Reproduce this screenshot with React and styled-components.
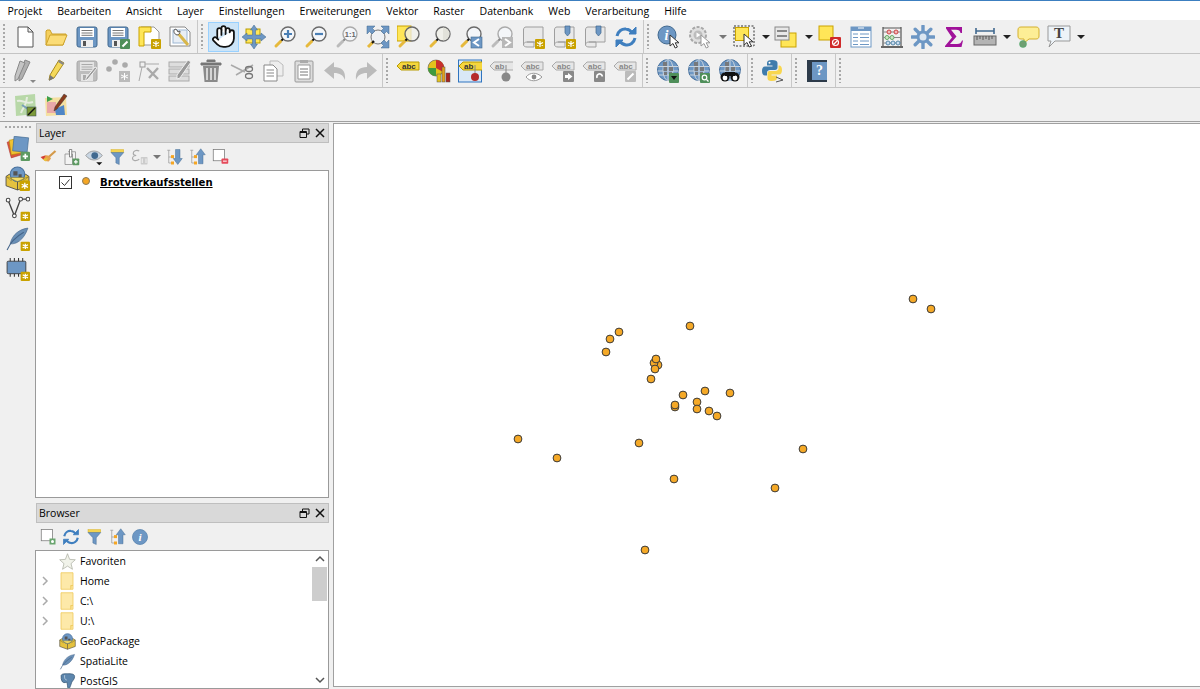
import React from "react";
import styled, { createGlobalStyle } from "styled-components";
import { Hand } from "lucide-react";

const Global = createGlobalStyle`
  html, body { margin: 0; padding: 0; background: #f0f0f0; overflow: hidden; }
  body { font-family: "Open Sans", "Liberation Sans", sans-serif; font-size: 10.5px; color: #000; }
`;

const Page = styled.div`
  width: 1200px;
  height: 689px;
  display: flex;
  flex-direction: column;
  overflow: hidden;
`;

const MenuBar = styled.div`
  height: 19px;
  flex: none;
  display: flex;
  align-items: center;
  background: #fff;
  border-top: 1px solid #3c7fc0;
`;

const MenuItem = styled.span`
  padding: 0 7.5px;
  font-size: 10.5px;
  line-height: 18px;
  white-space: nowrap;
`;

const Toolbar = styled.div`
  height: 33px;
  flex: none;
  display: flex;
  align-items: stretch;
  background: #f0f0f0;
  border-bottom: 1px solid ${(p) => (p.$last ? "#a0a0a0" : "#c4c4c4")};
`;

const ToolGroup = styled.div`
  display: flex;
  align-items: center;
  padding-right: ${(p) => p.$pad ?? 1}px;
  border-right: ${(p) => (p.$open ? "none" : "1px solid #c8c8c8")};
`;

const Handle = styled.div`
  width: 10px;
  height: 100%;
  flex: none;
  box-sizing: border-box;
  padding: 4px 0 4px 3px;
  &::before {
    content: "";
    display: block;
    width: 3px;
    height: 100%;
    background: radial-gradient(circle at 1px 1px, #a8a8a8 1px, transparent 1.2px) 0 0 / 3px 4px;
  }
`;

const ToolButton = styled.div`
  width: 31px;
  height: 30px;
  flex: none;
  box-sizing: border-box;
  display: flex;
  align-items: center;
  justify-content: center;
  padding-right: ${(p) => (p.$active ? 0 : 1)}px;
  background: ${(p) => (p.$active ? "#cce4f7" : "transparent")};
  border: 1px solid ${(p) => (p.$active ? "#99d1ff" : "transparent")};
`;

const Caret = styled.div`
  width: ${(p) => p.$w}px;
  flex: none;
  display: flex;
  justify-content: center;
  &::before {
    content: "";
    border-left: 4px solid transparent;
    border-right: 4px solid transparent;
    border-top: 4px solid ${(p) => (p.$muted ? "#777" : "#222")};
  }
`;

const Main = styled.div`
  flex: 1;
  min-height: 0;
  display: flex;
  padding-top: 1px;
`;

const Strip = styled.div`
  width: 35px;
  flex: none;
  display: flex;
  flex-direction: column;
  align-items: center;
  padding-top: 3px;
`;

const StripHandle = styled.div`
  width: 26px;
  height: 3px;
  margin-bottom: 4px;
  background: radial-gradient(circle at 1px 1px, #a8a8a8 1px, transparent 1.2px) 0 0 / 4px 3px;
`;

const StripButton = styled.div`
  height: 30px;
  display: flex;
  align-items: center;
  justify-content: center;
`;

const Docks = styled.div`
  width: 294px;
  flex: none;
  display: flex;
  flex-direction: column;
  gap: 5px;
  margin-right: 4px;
`;

const Dock = styled.section`
  display: flex;
  flex-direction: column;
  flex: ${(p) => (p.$grow ? "1" : "none")};
  min-height: 0;
  height: ${(p) => (p.$h ? `${p.$h}px` : "auto")};
`;

const DockTitle = styled.header`
  height: 18px;
  flex: none;
  display: flex;
  align-items: center;
  padding: 0 3px 0 2px;
  margin-left: 1px;
  background: #d9d9d9;
  border: 1px solid #bfbfbf;
`;

const DockName = styled.span`
  flex: 1;
`;

const DockActions = styled.div`
  display: flex;
  align-items: center;
  gap: 5px;
`;

const DockTools = styled.div`
  height: 27px;
  flex: none;
  display: flex;
  align-items: center;
  padding-left: 1px;
`;

const DockTool = styled.div`
  width: 23px;
  height: 22px;
  flex: none;
  display: flex;
  align-items: center;
  justify-content: center;
`;

const TreeBox = styled.div`
  flex: 1;
  min-height: 0;
  position: relative;
  background: #fff;
  border: 1px solid #9a9a9a;
  overflow: hidden;
`;

const LayerRow = styled.div`
  height: 22px;
  display: flex;
  align-items: center;
  padding-left: 23px;
`;

const CheckBox = styled.div`
  width: 13px;
  height: 13px;
  flex: none;
  box-sizing: border-box;
  display: flex;
  align-items: center;
  justify-content: center;
  background: #fff;
  border: 1px solid #333;
`;

const LayerDot = styled.span`
  width: 6px;
  height: 6px;
  margin: 0 10px 2px 10px;
  flex: none;
  border-radius: 50%;
  background: #f5a623;
  border: 1px solid #8a7a5a;
`;

const LayerName = styled.span`
  font-family: "DejaVu Sans", sans-serif;
  font-size: 10.1px;
  font-weight: 700;
  text-decoration: underline;
`;

const BrowserRow = styled.div`
  height: 20px;
  display: flex;
  align-items: center;
`;

const Expander = styled.span`
  width: 21px;
  padding-right: 3px;
  box-sizing: border-box;
  flex: none;
  display: flex;
  justify-content: center;
`;

const RowIcon = styled.span`
  width: 20px;
  margin-right: 3px;
  flex: none;
  display: flex;
  justify-content: center;
`;

const ScrollTrack = styled.div`
  position: absolute;
  top: 0;
  right: 1px;
  bottom: 0;
  width: 15px;
  display: flex;
  flex-direction: column;
  align-items: center;
  background: #fff;
`;

const ScrollArrow = styled.div`
  height: 16px;
  flex: none;
  display: flex;
  align-items: center;
  justify-content: center;
`;

const ScrollThumb = styled.div`
  width: 100%;
  height: 34px;
  background: #cdcdcd;
`;

const ScrollRest = styled.div`
  flex: 1;
`;

const Canvas = styled.main`
  flex: 1;
  min-width: 0;
  height: 562px;
  background: #fff;
  border-left: 1px solid #a0a0a0;
  border-top: 1px solid #a0a0a0;
  border-bottom: 1px solid #a0a0a0;
`;

const MapSvg = styled.svg`
  display: block;
  width: 100%;
  height: 100%;
`;

const Icon = ({ size = 24, children }) => (
  <svg width={size} height={size} viewBox="0 0 24 24" fill="none">
    {children}
  </svg>
);

const BLUE = "#6d97c4";
const DBLUE = "#41698f";
const YEL = "#ffe658";
const GOLD = "#c9a200";

const Lens = ({ muted, glass = "#f4f6f9", children }) => (
  <g>
    <circle cx="15" cy="9" r="7" fill={glass} stroke={muted ? "#aaa" : "#6a6a6a"} strokeWidth="1.4" />
    <path d="M10 14L7.5 16.5" stroke={muted ? "#888" : "#111"} strokeWidth="2" />
    <path d="M7.5 16.5L3 21" stroke={muted ? "#bbb" : "#e6b93c"} strokeWidth="3" strokeLinecap="round" />
    {children}
  </g>
);

const GoldBadge = ({ x = 14, y = 14, s = 10 }) => (
  <g transform={`translate(${x} ${y})`}>
    <rect width={s} height={s} rx="1" fill={GOLD} />
    <path
      d={`M${s / 2} 2V${s - 2}M2 ${s / 2 - 1.5}L${s - 2} ${s / 2 + 1.5}M2 ${s / 2 + 1.5}L${s - 2} ${s / 2 - 1.5}`}
      stroke="#fff"
      strokeWidth="1.2"
    />
  </g>
);

const PlusBadge = ({ x = 15, y = 15, s = 9, color = "#5d9a62" }) => (
  <g transform={`translate(${x} ${y})`}>
    <rect width={s} height={s} rx="1" fill={color} />
    <path d={`M${s / 2} 2V${s - 2}M2 ${s / 2}H${s - 2}`} stroke="#fff" strokeWidth="1.6" />
  </g>
);

const Cursor = ({ x = 12, y = 10, muted }) => (
  <path
    transform={`translate(${x} ${y})`}
    d="M0 0V11L3 8.5L5.2 13L7.4 12L5.2 7.8H9Z"
    fill="#fff"
    stroke={muted ? "#999" : "#333"}
    strokeWidth="1"
  />
);

const Floppy = ({ muted }) => {
  const main = muted ? "#bdbdbd" : BLUE;
  const edge = muted ? "#a8a8a8" : DBLUE;
  return (
    <g>
      <rect x="2" y="2" width="20" height="20" rx="2" fill={main} stroke={edge} />
      <rect x="5" y="3" width="14" height="9" fill={muted ? "#e4e4e4" : "#fff"} />
      <path d="M6.5 5.5H17.5M6.5 8H17.5M6.5 10.3H17.5" stroke={muted ? "#aaa" : "#777"} />
      <rect x="6" y="15" width="12" height="7" fill={muted ? "#e4e4e4" : "#eee"} />
      <rect x="8" y="16" width="3" height="5" fill={muted ? "#aaa" : "#555"} />
    </g>
  );
};

const PencilBadge = ({ color = "#4f8f5a" }) => (
  <g>
    <rect x="14" y="14" width="10" height="10" rx="1" fill={color} />
    <path d="M16.5 21.5L21.5 16.5" stroke="#fff" strokeWidth="2" />
  </g>
);

const Scroll = () => (
  <path
    d="M5 2H22V17H6C4 17 2.5 18 2.5 20V5C2.5 3 3.5 2 5 2ZM2.5 20C2.5 21 4 22 6 22H13V17H6"
    fill="#e9e9e9"
    stroke="#9e9e9e"
  />
);

const BookMark = () => <path d="M13 1H18V8L15.5 11L13 8Z" fill={BLUE} stroke={DBLUE} strokeWidth=".7" />;

const Globe = ({ children }) => (
  <g>
    <circle cx="12" cy="11" r="10.5" fill={BLUE} stroke="#456f9c" />
    <ellipse cx="12" cy="11" rx="5" ry="10.5" stroke="#c9d3dd" />
    <path d="M2 7.5H22M1.5 12H22.5M3 16H21M12 .5V21.5" stroke="#c9d3dd" />
    <path d="M7 3H11V7H7ZM13 8H17V12H13ZM7.5 8H11V12H7.5ZM8 13H11V16H8ZM13 13H16V16H13Z" fill="#77797c" />
    {children}
  </g>
);

const Tag = ({ text, fill = "#e6e6e6", edge = "#aaa", color = "#888", width = 18 }) => (
  <g>
    <path d={`M1 7L5 3H${5 + width}V11H5Z`} fill={fill} stroke={edge} />
    <text x="6" y="10" fontFamily="Liberation Sans, sans-serif" fontWeight="700" fontSize="8" fill={color}>
      {text}
    </text>
  </g>
);

const Funnel = () => (
  <g>
    <rect x="4" y="2" width="17" height="4" fill="#f3d34f" stroke="#d4b02d" strokeWidth=".6" />
    <path d="M4 6H21L15 13V22L10.5 20V13Z" fill={BLUE} stroke={DBLUE} strokeWidth=".6" />
  </g>
);

const Refresh = () => (
  <g stroke="#3f7fbf" strokeWidth="3" fill="none">
    <path d="M3 11C4 6 8 3.5 12 4C15 4.3 17 6 18 8" />
    <path d="M21 13C20 18 16 20.5 12 20C9 19.7 7 18 6 16" />
    <path d="M15 9H22V2Z" fill="#3f7fbf" strokeWidth="1" />
    <path d="M9 15H2V22Z" fill="#3f7fbf" strokeWidth="1" />
  </g>
);

const TreeArrows = ({ up }) => (
  <g>
    <path d="M3 3H7M5 3V20H8M5 12H8" stroke="#999" />
    <rect x="8" y="9.5" width="4" height="4" fill="#f5a623" />
    <rect x="8" y="18" width="4" height="4" fill="#f5a623" />
    <path
      d={up ? "M17 1L23 9H20V21H14V9H11Z" : "M14 2H20V14H23L17 22L11 14H14Z"}
      fill={BLUE}
      stroke={DBLUE}
      strokeWidth=".6"
    />
  </g>
);

const Gpkg = () => (
  <g>
    <path d="M1 10L4 8H20L23 10V19L12 23L1 19Z" fill="#e5c23f" stroke="#444" strokeWidth=".8" />
    <circle cx="12" cy="8" r="7" fill={BLUE} stroke="#456f9c" />
    <path d="M8 5H12V9H8ZM13 8H16V11H13Z" fill="#555" />
    <path d="M1 10L12 15L23 10L18 14V11H6V14Z" fill="#f2dc6a" stroke="#7a6a20" strokeWidth=".5" />
    <path d="M12 15V23" stroke="#444" strokeWidth=".8" />
  </g>
);

const Feather = ({ color = "#6a8fb5" }) => (
  <g>
    <path d="M22 2C14 3 7 8 5 17C10 18 18 14 22 2Z" fill={color} stroke="#45658a" strokeWidth=".6" />
    <path d="M2 23C5 16 11 10 18 6" stroke="#45658a" strokeWidth="1" />
  </g>
);

const icons = {
  newFile: <path d="M5 2H15L20 7V22H5Z M15 2V7H20" fill="#fff" stroke="#555" strokeWidth="1" />,
  open: (
    <g>
      <path d="M2 6V20H19L22 9H8L6 5H3Z" fill="#f5cf5c" stroke="#cda22b" />
      <path d="M2 20L6 10H23L19 20Z" fill="#fbdc76" stroke="#cda22b" />
    </g>
  ),
  save: <Floppy />,
  saveAs: (
    <g>
      <Floppy />
      <PencilBadge />
    </g>
  ),
  newLayout: (
    <g>
      <path d="M4 2H17L22 7V20H4Z" fill="#fff" stroke="#999" />
      <path d="M2 2H14V7H7V21H2Z" fill="#ffe658" stroke="#c9a200" />
      <GoldBadge />
    </g>
  ),
  layouts: (
    <g>
      <path d="M2 2H17L22 7V21H2Z" fill="#fff" stroke="#888" />
      <rect x="5" y="5" width="14" height="13" fill="#e8eef5" stroke="#9db7d3" />
      <path d="M9 7L20 20" stroke="#d8b64a" strokeWidth="3" />
      <path d="M7 4C5 6 6 9 9 10C11 10 12 8 12 6L10 7L9 5Z" fill="#fff" stroke="#555" />
    </g>
  ),
  pan: <Hand size={25} color="#111" fill="#fff" strokeWidth={1.7} />,
  panSelect: (
    <g>
      <rect x="4" y="4" width="14" height="14" fill={YEL} stroke="#b89b00" />
      <path
        d="M12 0L15.5 5H13.5V10H19V8L24 12L19 16V14H13.5V19H15.5L12 24L8.5 19H10.5V14H5V16L0 12L5 8V10H10.5V5H8.5Z"
        fill={BLUE}
        stroke={DBLUE}
        strokeWidth=".5"
      />
    </g>
  ),
  zoomIn: (
    <Lens>
      <path d="M15 5V13M11 9H19" stroke="#4a7fb5" strokeWidth="2.2" />
    </Lens>
  ),
  zoomOut: (
    <Lens>
      <path d="M11 9H19" stroke="#4a7fb5" strokeWidth="2.2" />
    </Lens>
  ),
  zoomActual: (
    <Lens muted>
      <text x="9.8" y="12" fontFamily="Liberation Sans, sans-serif" fontWeight="700" fontSize="7.5" fill="#666">
        1:1
      </text>
    </Lens>
  ),
  zoomFull: (
    <g>
      <circle cx="12" cy="12" r="7" fill="#eef1f4" stroke="#777" />
      <path
        d="M1 1H9L6.5 3.5L9 6L6 9L3.5 6.5L1 9ZM23 1V9L20.5 6.5L18 9L15 6L17.5 3.5L15 1ZM23 23H15L17.5 20.5L15 18L18 15L20.5 17.5L23 15Z"
        fill={BLUE}
        stroke={DBLUE}
        strokeWidth=".5"
      />
      <path d="M7 17L2 22" stroke="#e6b93c" strokeWidth="3" />
      <path d="M8 16L6 18" stroke="#111" strokeWidth="2" />
    </g>
  ),
  zoomLayer: (
    <g>
      <rect x="0" y="1" width="14" height="15" fill={YEL} stroke="#c9a200" />
      <Lens glass="rgba(240,240,235,.75)" />
    </g>
  ),
  zoomSelection: (
    <Lens glass="#f0f0ea">
      <path d="M15 2.5A6.5 6.5 0 0 1 15 15.5Z" fill="#e2e2da" />
    </Lens>
  ),
  zoomLast: (
    <g>
      <Lens />
      <rect x="12" y="12" width="11" height="11" fill={BLUE} stroke={DBLUE} strokeWidth=".6" />
      <path d="M20 14L15 17.5L20 21" stroke="#fff" strokeWidth="2" fill="none" />
    </g>
  ),
  zoomNext: (
    <g>
      <Lens muted />
      <rect x="12" y="12" width="11" height="11" fill="#b8b8b8" />
      <path d="M15 14L20 17.5L15 21" stroke="#fff" strokeWidth="2" fill="none" />
    </g>
  ),
  newMap: (
    <g>
      <Scroll />
      <GoldBadge />
    </g>
  ),
  newBookmark: (
    <g>
      <Scroll />
      <BookMark />
      <GoldBadge />
    </g>
  ),
  bookmarks: (
    <g>
      <Scroll />
      <BookMark />
    </g>
  ),
  refresh: <Refresh />,
  identify: (
    <g>
      <circle cx="10" cy="10" r="9" fill={BLUE} stroke={DBLUE} />
      <text x="7.5" y="15" fontFamily="Liberation Serif, serif" fontStyle="italic" fontWeight="700" fontSize="14" fill="#fff">
        i
      </text>
      <Cursor x="13" y="10" />
    </g>
  ),
  action: (
    <g>
      <circle cx="10" cy="10" r="8" fill="#e0e0e0" stroke="#a8a8a8" strokeWidth="2" strokeDasharray="3 1.5" />
      <circle cx="10" cy="10" r="4.5" fill="#bdbdbd" />
      <path d="M8.5 7.5L12.5 10L8.5 12.5Z" fill="#fff" />
      <Cursor x="13" y="10" muted />
    </g>
  ),
  select: (
    <g>
      <rect x="1" y="1" width="20" height="20" stroke="#333" strokeDasharray="2 1.5" />
      <rect x="2.5" y="2.5" width="13" height="13" fill={YEL} stroke="#c9a200" />
      <Cursor x="11" y="9" />
    </g>
  ),
  selectForm: (
    <g>
      <rect x="7" y="8" width="15" height="14" fill={YEL} stroke="#c9a200" />
      <rect x="1" y="2" width="14" height="13" fill="#e8e8e8" stroke="#888" />
      <path d="M3 6H13M3 11H13" stroke="#888" strokeWidth="2" />
    </g>
  ),
  deselect: (
    <g>
      <rect x="1" y="1" width="14" height="14" fill={YEL} stroke="#c9a200" />
      <rect x="12" y="12" width="11" height="11" rx="1" fill="#cf2a2a" />
      <circle cx="17.5" cy="17.5" r="3" stroke="#fff" strokeWidth="1.2" />
      <path d="M15.5 19.5L19.5 15.5" stroke="#fff" strokeWidth="1.2" />
    </g>
  ),
  table: (
    <g>
      <rect x="2" y="2" width="20" height="20" fill="#fff" stroke={BLUE} />
      <rect x="2" y="2" width="20" height="4" fill={BLUE} />
      <path d="M9 3H15" stroke="#fff" />
      <path d="M4 9H9M11 9H20M4 12.5H9M11 12.5H20M4 16H9M11 16H20M4 19.5H9M11 19.5H20" stroke={BLUE} />
    </g>
  ),
  stats: (
    <g>
      <path d="M3 2V22M21 2V22M3 3H21" stroke="#555" strokeWidth="1.2" />
      <rect x="1" y="21" width="22" height="2" fill="#666" />
      <path d="M3 7H21M3 12.5H21M3 18H21" stroke="#888" />
      <circle cx="9" cy="7" r="2" fill="#f2b8b8" stroke="#c44" />
      <circle cx="16" cy="7" r="2" fill="#f2b8b8" stroke="#c44" />
      <circle cx="7" cy="12.5" r="2" fill="#cfe6c8" stroke="#6a6" />
      <circle cx="12" cy="12.5" r="2" fill="#cfe6c8" stroke="#6a6" />
      <circle cx="8" cy="18" r="2" fill="#c9dcf0" stroke="#58a" />
      <circle cx="13" cy="18" r="2" fill="#c9dcf0" stroke="#58a" />
      <circle cx="18" cy="18" r="2" fill="#c9dcf0" stroke="#58a" />
    </g>
  ),
  gear: (
    <g>
      <path d="M12 1V23M1 12H23M4.2 4.2L19.8 19.8M19.8 4.2L4.2 19.8" stroke={BLUE} strokeWidth="3.4" strokeLinecap="round" />
      <circle cx="12" cy="12" r="6.5" fill={BLUE} />
      <circle cx="12" cy="12" r="3.5" fill="#dbe6f1" />
    </g>
  ),
  sigma: <path d="M4 2H20V8H18.5C18 5.5 17 4.8 14 4.8H9L14.5 11.5L8 19H15C18 19 19 18 20 15.5H21L19.5 22H3V21L10 12.5L4 3.5Z" fill="#a0129a" />,
  ruler: (
    <g>
      <path d="M3 6H21M3 3V9M21 3V9" stroke="#41698f" strokeWidth="1.6" />
      <rect x="1" y="11" width="22" height="9" fill="#b4b4b4" stroke="#666" />
      <path d="M4 11V15M7 11V14M10 11V15M13 11V14M16 11V15M19 11V14" stroke="#555" />
    </g>
  ),
  tip: (
    <g>
      <path d="M5 2H20C22 2 23 3 23 5V11C23 13 22 14 20 14H13L8 18V14H5C3 14 2 13 2 11V5C2 3 3 2 5 2Z" fill="#fdee96" stroke="#d4b02d" />
      <circle cx="7" cy="19" r="3.5" fill="#6f9f72" stroke="#4a6" strokeWidth=".5" />
    </g>
  ),
  textTip: (
    <g>
      <path d="M1 1H23V16H8L2 22L4 16H1Z" fill="#edf3f8" stroke="#999" />
      <text x="12" y="13" textAnchor="middle" fontFamily="Liberation Serif, serif" fontWeight="700" fontSize="15" fill="#444">
        T
      </text>
    </g>
  ),
  digitize: (
    <g>
      <path d="M12 1L17 3L9 20L6 22L6 17Z" fill="#b0b0b0" stroke="#888" />
      <path d="M7 2L12 4L5 20L2 22L2 17Z" fill="#c4c4c4" stroke="#888" />
      <path d="M17 21H23L20 24Z" fill="#888" />
    </g>
  ),
  pencil: (
    <g>
      <path d="M15 1L20 4L10 19L5 21L6 16Z" fill="#f5d95a" stroke="#a88a1f" />
      <path d="M6 16L10 19L5 22Z" fill="#777" />
      <path d="M15 1L20 4L19 6L14 3Z" fill="#888" />
    </g>
  ),
  saveEdits: (
    <g>
      <Floppy muted />
      <path d="M22 9L13 20L11 22L11 19L20 8Z" fill="#999" stroke="#f0f0f0" />
    </g>
  ),
  addPoints: (
    <g>
      <circle cx="9" cy="3" r="2.8" fill="#aaa" />
      <circle cx="3" cy="10" r="2.8" fill="#aaa" />
      <circle cx="19" cy="6" r="2.8" fill="#aaa" />
      <rect x="13" y="12" width="11" height="11" fill="#bbb" />
      <path d="M18.5 14V21M15 16L22 19M15 19L22 16" stroke="#fff" />
    </g>
  ),
  vertex: (
    <g>
      <rect x="3" y="3" width="5" height="5" fill="none" stroke="#999" />
      <path d="M8 5H22M5 8L2 22" stroke="#aaa" />
      <path d="M10 9L21 20M21 9L12 19" stroke="#aaa" strokeWidth="2.4" />
    </g>
  ),
  modifyTable: (
    <g>
      <rect x="1" y="3" width="20" height="5" fill="#ddd" stroke="#aaa" />
      <rect x="1" y="10" width="20" height="5" fill="#ddd" stroke="#aaa" />
      <rect x="1" y="17" width="20" height="5" fill="#ddd" stroke="#aaa" />
      <path d="M20 1L23 3L12 19L9 20L9 16Z" fill="#999" stroke="#f0f0f0" />
    </g>
  ),
  trash: (
    <g>
      <path d="M8 3V1H16V3M2 4H22V6H2Z" fill="#777" stroke="#777" />
      <path d="M4 7H20L18.5 23H5.5Z" fill="#8a8a8a" />
      <path d="M8 9V21M12 9V21M16 9V21" stroke="#e8e8e8" strokeWidth="1.6" />
    </g>
  ),
  cut: (
    <g>
      <path d="M1 6L15 13M23 6L6 16" stroke="#aaa" strokeWidth="1.6" />
      <ellipse cx="19" cy="10" rx="3.5" ry="2.5" stroke="#777" strokeWidth="1.3" />
      <ellipse cx="19" cy="17" rx="3.5" ry="2.5" stroke="#777" strokeWidth="1.3" />
    </g>
  ),
  copy: (
    <g>
      <path d="M9 2H17L22 6V17H9Z" fill="#eee" stroke="#bbb" />
      <path d="M3 6H12L16 10V22H3Z" fill="#fff" stroke="#888" />
      <path d="M5.5 11H13M5.5 14H13M5.5 17H13" stroke="#888" />
    </g>
  ),
  paste: (
    <g>
      <rect x="3" y="2" width="18" height="21" rx="1" fill="#ddd" stroke="#999" />
      <rect x="8" y="1" width="8" height="3" fill="#aaa" />
      <path d="M6 6H18V20H6Z" fill="#fff" stroke="#999" />
      <path d="M8 10H16M8 13H16M8 16H16" stroke="#777" />
    </g>
  ),
  undo: <path d="M11 3V8C18 8 23 11 22 21C20 16 17 14 11 14V20L1 11.5Z" fill="#bbb" />,
  redo: <path d="M13 3V8C6 8 1 11 2 21C4 16 7 14 13 14V20L23 11.5Z" fill="#bbb" />,
  label: <Tag text="abc" fill="#f5d63d" edge="#b89b00" color="#333" />,
  diagram: (
    <g>
      <circle cx="9" cy="9" r="8" fill="#e3c21c" stroke="#555" strokeWidth=".6" />
      <path d="M9 9V1A8 8 0 0 1 16 13Z" fill="#c9302c" />
      <path d="M9 9L1 9A8 8 0 0 0 9 17Z" fill="#3f9a3f" />
      <rect x="10" y="15" width="4" height="8" fill="#e3c21c" stroke="#555" strokeWidth=".5" />
      <rect x="15" y="8" width="3" height="15" fill="#e3a21c" stroke="#555" strokeWidth=".5" />
      <rect x="19" y="14" width="4" height="9" fill="#a82420" stroke="#555" strokeWidth=".5" />
    </g>
  ),
  pinActive: (
    <g>
      <rect x=".5" y="1" width="23" height="22" fill="#d9e8f7" stroke="#2f74c0" />
      <Tag text="ab" fill="#f5d63d" edge="#b89b00" color="#333" width="14" />
      <path d="M17 6V15" stroke="#888" />
      <circle cx="17" cy="18" r="4" fill="#b52a2a" />
    </g>
  ),
  pinGrey: (
    <g>
      <Tag text="ab" width="14" />
      <path d="M17 6V15" stroke="#888" />
      <circle cx="17" cy="18" r="4.5" fill="#888" />
    </g>
  ),
  labelEye: (
    <g>
      <Tag text="abc" />
      <path d="M6 18C10 13 17 13 22 18C17 23 10 23 6 18Z" fill="#fff" stroke="#999" />
      <circle cx="14" cy="18" r="2.4" fill="#888" />
    </g>
  ),
  labelMove: (
    <g>
      <Tag text="abc" />
      <rect x="12" y="12" width="11" height="11" rx="1" fill="#888" />
      <path d="M14 16H17V14L21.5 17.5L17 21V19H14Z" fill="#fff" />
    </g>
  ),
  labelRotate: (
    <g>
      <Tag text="abc" />
      <rect x="12" y="12" width="11" height="11" rx="1" fill="#888" />
      <path d="M15 19C14 15 19 13 20.5 17.5" stroke="#fff" strokeWidth="1.6" />
    </g>
  ),
  labelEdit: (
    <g>
      <Tag text="abc" />
      <rect x="12" y="12" width="11" height="11" rx="1" fill="#bbb" />
      <path d="M14.5 20.5L20.5 14.5" stroke="#fff" strokeWidth="2" />
    </g>
  ),
  globeAdd: (
    <Globe>
      <rect x="13" y="14" width="10" height="10" rx="1" fill="#4f8f5a" />
      <path d="M15 17H21L18 21Z" fill="#111" />
    </Globe>
  ),
  globeFind: (
    <Globe>
      <rect x="13" y="14" width="10" height="10" rx="1" fill="#4f8f5a" />
      <circle cx="17.5" cy="18.5" r="2.3" stroke="#fff" strokeWidth="1.2" />
      <path d="M19.5 20.5L21.5 22.5" stroke="#fff" strokeWidth="1.2" />
    </Globe>
  ),
  globeBino: (
    <Globe>
      <circle cx="7" cy="18" r="4.5" fill="#111" />
      <circle cx="17" cy="18" r="4.5" fill="#111" />
      <circle cx="7" cy="19" r="2.4" fill="#fff" />
      <circle cx="17" cy="19" r="2.4" fill="#fff" />
      <path d="M7 13H17V17H7Z" fill="#111" />
    </Globe>
  ),
  python: (
    <g>
      <path d="M11 1C7.5 1 6 2.3 6 4V6.5H11.5V7.5H4C2 7.5 1 9.5 1 12C1 14.5 2 16.5 4 16.5H6V13.5C6 12 7.5 11 9 11H14C15.5 11 16.5 10 16.5 8.5V4C16.5 2.3 14.5 1 11 1Z" fill="#3f7cac" />
      <path d="M11 22C14.5 22 16 20.7 16 19V16.5H10.5V15.5H18C20 15.5 21 13.5 21 11C21 8.5 20 6.5 18 6.5H17.5V9.5C17.5 11 16 12 14.5 12H8.5C7 12 6.5 13 6.5 14.5V19C6.5 20.7 7.5 22 11 22Z" fill="#f8d64e" />
      <path d="M15 18L22 21L15 23" stroke="#555" strokeWidth="1" fill="none" />
      <circle cx="8.5" cy="3.7" r="1" fill="#fff" />
    </g>
  ),
  help: (
    <g>
      <rect x="2" y="1" width="20" height="22" fill={BLUE} />
      <rect x="2" y="1" width="5" height="22" fill="#2d3b4a" />
      <path d="M2 1H22V3H2ZM2 21H22V23H2Z" fill="#2d3b4a" />
      <text x="14.5" y="16" textAnchor="middle" fontFamily="Liberation Serif, serif" fontWeight="700" fontSize="14" fill="#fff">
        ?
      </text>
    </g>
  ),
  osm: (
    <g>
      <path d="M2 3L22 1L23 21L3 23Z" fill="#b8d8a8" />
      <path d="M4 8C10 6 12 12 20 9M8 20C10 14 14 12 14 4" stroke="#e6ede0" strokeWidth="2" />
      <path d="M9 12L15 16" stroke="#7aa0b8" strokeWidth="2" />
      <rect x="14" y="14" width="9" height="9" fill="#7d9a3a" stroke="#345" strokeWidth=".5" />
      <path d="M15 22L22 15" stroke="#111" strokeWidth="1.4" />
    </g>
  ),
  osmEdit: (
    <g>
      <path d="M1 5L22 4L23 22L2 23Z" fill="#f5dfa0" />
      <path d="M3 9H12V20H3Z" fill="#e8a8a8" />
      <path d="M3 3L9 6L3 9Z" fill="#3fa04a" />
      <path d="M11 16L20 12L21 22L12 22Z" fill="#4f86c6" />
      <path d="M11 14L20 1L23 3L13 16L10 18Z" fill="#8a3a1c" stroke="#333" strokeWidth=".5" />
    </g>
  ),
  addLayers: (
    <g>
      <path d="M2 6L13 2L16 18L6 21Z" fill="#d9583b" stroke="#a33" strokeWidth=".5" />
      <path d="M4 4L15 2L17 16L6 18Z" fill="#f1c232" stroke="#a80" strokeWidth=".5" />
      <rect x="8" y="1" width="14" height="14" transform="rotate(6 15 8)" fill={BLUE} stroke={DBLUE} strokeWidth=".6" />
      <PlusBadge x="15" y="15" s="9" />
    </g>
  ),
  addGpkg: (
    <g>
      <Gpkg />
      <GoldBadge x="14" y="14" />
    </g>
  ),
  addVector: (
    <g>
      <path d="M3 4L9 19L15 3L22 3" stroke="#444" strokeWidth="1.3" />
      <circle cx="3" cy="4" r="1.8" fill="#fff" stroke="#444" />
      <circle cx="9" cy="19" r="1.8" fill="#fff" stroke="#444" />
      <circle cx="15" cy="3" r="1.8" fill="#fff" stroke="#444" />
      <circle cx="22" cy="3" r="1.8" fill="#fff" stroke="#444" />
      <GoldBadge x="15" y="15" s="9" />
    </g>
  ),
  addFeather: (
    <g>
      <Feather />
      <GoldBadge x="15" y="15" s="9" />
    </g>
  ),
  addChip: (
    <g>
      <rect x="2" y="5" width="18" height="12" rx="1" fill={BLUE} stroke="#333" strokeWidth=".8" />
      <path d="M5 2V5M9 2V5M13 2V5M17 2V5M5 17V20M9 17V20M13 17V20" stroke="#333" />
      <GoldBadge x="15" y="15" s="9" />
    </g>
  ),
  brush: (
    <g>
      <path d="M22 4L13 12" stroke="#d49a4a" strokeWidth="3" />
      <path d="M3 13C7 9 11 9 14 11L16 14L13 18C9 18 6 17 3 13Z" fill="#e8a04a" />
      <path d="M2 12L9 10L6 15Z" fill="#d23a3a" />
      <path d="M5 15L12 13L9 18Z" fill="#e6c53a" />
    </g>
  ),
  addGroup: (
    <g>
      <path d="M4 8H14V22H4ZM8 5H18V18" stroke="#888" fill="#f3f3f3" />
      <path d="M10 2V12H13V2Z" stroke="#666" fill="#fff" />
      <PlusBadge x="14" y="14" s="9" />
    </g>
  ),
  eye: (
    <g>
      <path d="M1 10C7 2 17 2 23 10C17 18 7 18 1 10Z" fill="#c9d6e3" stroke="#888" />
      <circle cx="13" cy="10" r="4.5" fill={DBLUE} />
      <path d="M15 19H23L19 23Z" fill="#111" />
    </g>
  ),
  funnel: <Funnel />,
  epsilon: (
    <g>
      <path d="M11 4C7 2 3 4 3 7C3 9 5 10 7 10C4 10 2 12 2 14C2 17 7 18 11 15" stroke="#aaa" strokeWidth="1.6" />
      <rect x="13" y="12" width="9" height="10" rx="1" fill="#ccc" />
      <path d="M15 14V20M20 14V20" stroke="#fff" />
    </g>
  ),
  expand: <TreeArrows />,
  collapse: <TreeArrows up />,
  removeLayer: (
    <g>
      <rect x="3" y="2" width="15" height="15" fill="#fff" stroke="#777" />
      <rect x="14" y="14" width="9" height="7" rx="1" fill="#e54b5b" />
      <path d="M16 17.5H21" stroke="#fff" strokeWidth="1.4" />
    </g>
  ),
  addDb: (
    <g>
      <rect x="3" y="2" width="15" height="15" fill="#fff" stroke="#777" />
      <rect x="14" y="14" width="8" height="8" fill="#6aa56f" />
      <circle cx="18" cy="18" r="2" fill="#fff" />
    </g>
  ),
  info: (
    <g>
      <circle cx="12" cy="12" r="10" fill={BLUE} stroke="#5681ad" />
      <text x="12" y="17" textAnchor="middle" fontFamily="Liberation Serif, serif" fontStyle="italic" fontWeight="700" fontSize="15" fill="#fff">
        i
      </text>
    </g>
  ),
  star: <path d="M12 1L15 9L23 9.5L17 15L19 23L12 18.5L5 23L7 15L1 9.5L9 9Z" fill="#f1f3ea" stroke="#a9ab9e" />,
  folder: (
    <g>
      <path d="M4 1H20V23H4Z" fill="#fde9a9" stroke="#eec553" />
      <path d="M17 23V18H20" fill="#fbe08a" stroke="#eec553" />
    </g>
  ),
  gpkg: <Gpkg />,
  feather: <Feather />,
  elephant: (
    <g>
      <path d="M3 4C3 1 8 1 12 1C17 1 22 1 22 5C22 9 19 11 18 13C17 16 15 23 13 23C12 21 12 15 11 13C8 14 5 14 4 11C3 9 3 7 3 4Z" fill="#5d86ad" stroke="#2f4f6f" />
      <path d="M8 3C7 7 9 10 11 10" stroke="#cfdce8" />
    </g>
  )
};

const row1 = [
  [["newFile"], ["open"], ["save"], ["saveAs"], ["newLayout"], ["layouts"]],
  [
    ["pan", { active: true }],
    ["panSelect"],
    ["zoomIn"],
    ["zoomOut"],
    ["zoomActual"],
    ["zoomFull"],
    ["zoomLayer"],
    ["zoomSelection"],
    ["zoomLast"],
    ["zoomNext"],
    ["newMap"],
    ["newBookmark"],
    ["bookmarks"],
    ["refresh"]
  ],
  [
    ["identify"],
    ["action", { caret: 14, muted: true }],
    ["select", { caret: 10 }],
    ["selectForm", { caret: 13 }],
    ["deselect"],
    ["table"],
    ["stats"],
    ["gear"],
    ["sigma"],
    ["ruler", { caret: 12 }],
    ["tip"],
    ["textTip", { caret: 12 }]
  ]
];

const row2 = [
  {
    pad: 0,
    items: ["digitize", "pencil", "saveEdits", "addPoints", "vertex", "modifyTable", "trash", "cut", "copy", "paste", "undo", "redo"]
  },
  {
    pad: 1,
    items: ["label", "diagram", "pinActive", "pinGrey", "labelEye", "labelMove", "labelRotate", "labelEdit"]
  },
  { pad: 1, items: ["globeAdd", "globeFind", "globeBino"] },
  { pad: 2, items: ["python"] },
  { pad: 2, items: ["help"] }
];

const layerTools = ["brush", "addGroup", "eye", "funnel", "epsilon"];
const layerToolsEnd = ["expand", "collapse", "removeLayer"];
const browserTools = ["addDb", "refresh", "funnel", "collapse", "info"];

const browserRows = [
  { name: "Favoriten", icon: "star" },
  { name: "Home", icon: "folder", arrow: true },
  { name: "C:\\", icon: "folder", arrow: true },
  { name: "U:\\", icon: "folder", arrow: true },
  { name: "GeoPackage", icon: "gpkg" },
  { name: "SpatiaLite", icon: "feather" },
  { name: "PostGIS", icon: "elephant" }
];

const menus = [
  "Projekt",
  "Bearbeiten",
  "Ansicht",
  "Layer",
  "Einstellungen",
  "Erweiterungen",
  "Vektor",
  "Raster",
  "Datenbank",
  "Web",
  "Verarbeitung",
  "Hilfe"
];

const points = [
  [913, 299], [931, 309], [690, 326], [619, 332], [610, 339], [606, 352],
  [658, 365], [654, 363], [656, 359], [655, 369], [651, 379], [730, 393],
  [705, 391], [683, 395], [697, 402], [675, 407], [675, 405], [697, 409],
  [709, 411], [717, 416], [518, 439], [639, 443], [803, 449], [557, 458],
  [674, 479], [775, 488], [645, 550]
];

const Tool = ({ name, active, size = 24 }) => (
  <ToolButton $active={active}>
    {name === "pan" ? icons.pan : <Icon size={size}>{icons[name]}</Icon>}
  </ToolButton>
);

const DockHeader = ({ title }) => (
  <DockTitle>
    <DockName>{title}</DockName>
    <DockActions>
      <svg width="11" height="11" viewBox="0 0 11 11" fill="none" stroke="#111">
        <path d="M3.5 3V1H10V6H7.5M1 3.5H7.5V9.5H1ZM1 4.5H7.5" />
      </svg>
      <svg width="10" height="10" viewBox="0 0 10 10" fill="none" stroke="#111" strokeWidth="1.5">
        <path d="M1 1L9 9M9 1L1 9" />
      </svg>
    </DockActions>
  </DockTitle>
);

const Chevron = ({ d, color = "#555" }) => (
  <svg width="10" height="10" viewBox="0 0 10 10" fill="none" stroke={color} strokeWidth="1.5">
    <path d={d} />
  </svg>
);

export default function App() {
  return (
    <Page>
      <Global />
      <MenuBar>
        {menus.map((m) => (
          <MenuItem key={m}>{m}</MenuItem>
        ))}
      </MenuBar>

      <Toolbar>
        {row1.map((group, i) => (
          <ToolGroup key={i} $open={i === 2}>
            <Handle />
            {group.map(([name, opts = {}]) => (
              <React.Fragment key={name}>
                <Tool name={name} active={opts.active} />
                {opts.caret && <Caret $w={opts.caret} $muted={opts.muted} />}
              </React.Fragment>
            ))}
          </ToolGroup>
        ))}
      </Toolbar>

      <Toolbar>
        {row2.map((group, i) => (
          <ToolGroup key={i} $pad={group.pad}>
            <Handle />
            {group.items.map((name) => (
              <Tool key={name} name={name} />
            ))}
          </ToolGroup>
        ))}
        <Handle />
      </Toolbar>

      <Toolbar $last>
        <ToolGroup $open>
          <Handle />
          <Tool name="osm" />
          <Tool name="osmEdit" />
        </ToolGroup>
      </Toolbar>

      <Main>
        <Strip>
          <StripHandle />
          {["addLayers", "addGpkg", "addVector", "addFeather", "addChip"].map((name) => (
            <StripButton key={name}>
              <Icon size={25}>{icons[name]}</Icon>
            </StripButton>
          ))}
        </Strip>

        <Docks>
          <Dock $h={375}>
            <DockHeader title="Layer" />
            <DockTools>
              {layerTools.map((name) => (
                <DockTool key={name}>
                  <Icon size={18}>{icons[name]}</Icon>
                </DockTool>
              ))}
              <Caret $w={11} $muted />
              {layerToolsEnd.map((name) => (
                <DockTool key={name}>
                  <Icon size={18}>{icons[name]}</Icon>
                </DockTool>
              ))}
            </DockTools>
            <TreeBox>
              <LayerRow>
                <CheckBox>
                  <svg width="11" height="11" viewBox="0 0 11 11" fill="none" stroke="#333">
                    <path d="M1.5 5.5L4.5 8.5L9.5 2.5" />
                  </svg>
                </CheckBox>
                <LayerDot />
                <LayerName>Brotverkaufsstellen</LayerName>
              </LayerRow>
            </TreeBox>
          </Dock>

          <Dock $grow>
            <DockHeader title="Browser" />
            <DockTools>
              {browserTools.map((name) => (
                <DockTool key={name}>
                  <Icon size={18}>{icons[name]}</Icon>
                </DockTool>
              ))}
            </DockTools>
            <TreeBox>
              {browserRows.map((row) => (
                <BrowserRow key={row.name}>
                  <Expander>{row.arrow && <Chevron d="M3 1L7 5L3 9" color="#aaa" />}</Expander>
                  <RowIcon>
                    <Icon size={row.icon === "folder" ? 18 : 17}>{icons[row.icon]}</Icon>
                  </RowIcon>
                  {row.name}
                </BrowserRow>
              ))}
              <ScrollTrack>
                <ScrollArrow>
                  <Chevron d="M1 7L5 3L9 7" />
                </ScrollArrow>
                <ScrollThumb />
                <ScrollRest />
                <ScrollArrow>
                  <Chevron d="M1 3L5 7L9 3" />
                </ScrollArrow>
              </ScrollTrack>
            </TreeBox>
          </Dock>
        </Docks>

        <Canvas>
          <MapSvg viewBox="334 124 866 562">
            {points.map(([x, y], i) => (
              <circle key={i} cx={x} cy={y} r="3.9" fill="#f5a927" stroke="#3a3a3a" strokeWidth="1" />
            ))}
          </MapSvg>
        </Canvas>
      </Main>
    </Page>
  );
}
